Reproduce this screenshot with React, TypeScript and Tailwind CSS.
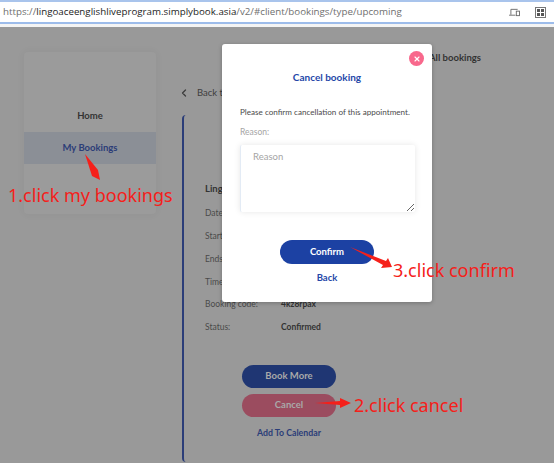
import { ChevronLeft, X } from "lucide-react";

const DETAILS = [
  { label: "Date:", value: "" },
  { label: "Starts:", value: "" },
  { label: "Ends:", value: "" },
  { label: "Timezone:", value: "" },
  { label: "Booking code:", value: "4kz8rpax" },
  { label: "Status:", value: "Confirmed" },
];

const NOTES = [
  { text: "1.click my bookings", className: "left-[8px] top-[182px]" },
  { text: "2.click cancel", className: "left-[354px] top-[392px]" },
  { text: "3.click confirm", className: "left-[393px] top-[257px]" },
];

const ARROWS = [
  "M85 154 L98 170 L100 180 L92 176 Z",
  "M315 403 L340 401 L340 398 L351 403 L340 408 L340 405 Z",
  "M350 247 L386 261 L388 258 L392 267 L381 268 L383 265 Z",
];

function UrlBar() {
  return (
    <div className="h-[27px] shrink-0 border-t-2 border-[#a9c4ec] bg-[#f4f4f4]">
      <div className="flex h-[22px] items-center justify-between border-b-2 border-[#9dbcea] bg-white pl-[3px] pr-[8px] font-['Open_Sans',sans-serif] text-[9.75px] text-[#6f6f6f]">
        <div className="whitespace-nowrap">
          https://<span className="text-[#1d1d1d]">lingoaceenglishliveprogram.simplybook.asia</span>
          /v2/#client/bookings/type/upcoming
        </div>
        <div className="flex items-center gap-[15px]">
          <svg width="11" height="9" viewBox="0 0 12 10" fill="none" stroke="#666">
            <path d="M2 7.5V1.5H9.5M0 8H7" />
            <rect x="8" y="3.5" width="3.5" height="5" />
          </svg>
          <svg width="11" height="11" viewBox="0 0 11 11" fill="#555">
            <rect x="0.5" y="0.5" width="10" height="10" fill="none" stroke="#777" />
            <rect x="2" y="2" width="3" height="3" />
            <rect x="6" y="2" width="3" height="3" />
            <rect x="2" y="6" width="3" height="3" />
            <rect x="6" y="6" width="3" height="3" />
          </svg>
        </div>
      </div>
    </div>
  );
}

function Sidebar() {
  return (
    <aside className="mt-[25px] flex h-[162px] w-[132px] shrink-0 flex-col rounded-[4px] bg-[#9b9b9b] pt-[48px] shadow-[0_0_8px_rgba(0,0,0,0.05)]">
      <div className="flex h-[32px] items-center justify-center text-[9.5px] font-bold text-[#333]">Home</div>
      <div className="flex h-[32px] items-center justify-center bg-[#8b8f96] text-[9.5px] font-bold text-[#2b3d78]">
        My Bookings
      </div>
    </aside>
  );
}

function BookingCard() {
  return (
    <section className="ml-[26px] flex-1">
      <div className="mt-[57px] flex h-[18px] items-center text-[9.5px] text-[#3d3d3d]">
        <ChevronLeft className="mr-[3px] h-[12px] w-[12px] -translate-x-[4px]" strokeWidth={2.5} />
        Back to
      </div>
      <div className="mt-[13px] h-[347px] w-[211px] rounded-l-[4px] border-l-2 border-[#2b3d78] pl-[21px] pt-[67px] text-[8.5px]">
        <div className="text-[9.5px] font-bold text-[#333]">Lingoace</div>
        <div className="mt-[6px] flex flex-col">
          {DETAILS.map((d) => (
            <div key={d.label} className="flex h-[22.8px] items-center text-[#4a4a4a]">
              <span className="w-[76px]">{d.label}</span>
              <span className="font-bold text-[#333]">{d.value}</span>
            </div>
          ))}
        </div>
        <div className="mt-[26px] ml-[37px] flex w-[94px] flex-col items-center">
          <div className="flex h-[23px] w-full items-center justify-center rounded-full bg-[#1f3673] text-[9.5px] font-bold text-[#a9a9a9]">
            Book More
          </div>
          <div className="mt-[6px] flex h-[23px] w-full items-center justify-center rounded-full bg-[#9b4c5f] text-[9.5px] font-bold text-[#a9a9a9]">
            Cancel
          </div>
          <div className="mt-[9px] whitespace-nowrap text-[8.75px] font-bold text-[#2b3d78]">Add To Calendar</div>
        </div>
      </div>
    </section>
  );
}

function CancelModal() {
  return (
    <div className="absolute left-[222px] top-[44px] flex h-[258px] w-[210px] flex-col rounded-[3px] bg-white px-[18px] shadow-[0_1px_4px_rgba(0,0,0,0.25)]">
      <button
        type="button"
        className="absolute right-[8px] top-[7px] flex h-[15px] w-[15px] items-center justify-center rounded-full bg-[#f8688c] text-white"
      >
        <X className="h-[8px] w-[8px]" strokeWidth={3.5} />
      </button>
      <h2 className="mt-[26px] text-center text-[10px] font-bold text-[#2547a8]">Cancel booking</h2>
      <p className="mt-[21px] whitespace-nowrap text-[8.1px] leading-[13px] text-[#4b4b4b]">
        Please confirm cancellation of this appointment.
      </p>
      <label className="mt-[7px] text-[8.5px] text-[#a5a5a5]">Reason:</label>
      <textarea
        placeholder="Reason"
        className="mt-[6px] h-[67px] w-[175px] rounded-[2px] border-l border-[#e3ebf5] bg-white px-[12px] py-[5px] text-[9.5px] shadow-[0_0_6px_rgba(0,0,0,0.1)] outline-none placeholder:text-[#a5a5a5]"
      />
      <button
        type="button"
        className="mx-auto mt-[28px] h-[24px] w-[94px] rounded-full bg-[#1c41a3] text-[9.5px] font-bold text-white"
      >
        Confirm
      </button>
      <div className="mt-[7px] text-center text-[9.5px] font-bold text-[#2547a8]">Back</div>
    </div>
  );
}

export default function App() {
  return (
    <div className="relative flex h-[463px] w-[554px] flex-col overflow-hidden bg-[#999999] font-['Lato',sans-serif]">
      <UrlBar />
      <div className="flex flex-1 pl-[24px]">
        <Sidebar />
        <BookingCard />
      </div>

      <div className="absolute left-[429px] top-[51px] text-[9.5px] font-bold text-[#333]">All bookings</div>
      <CancelModal />

      {/* red annotations pasted over the screenshot */}
      <svg className="absolute left-0 top-0" width="554" height="463" fill="#f5201a">
        {ARROWS.map((d) => (
          <path key={d} d={d} />
        ))}
      </svg>
      {NOTES.map((n) => (
        <div
          key={n.text}
          className={`absolute whitespace-nowrap font-['Noto_Sans',sans-serif] text-[18px] leading-[26px] text-[#f5201a] ${n.className}`}
        >
          {n.text}
        </div>
      ))}
    </div>
  );
}
